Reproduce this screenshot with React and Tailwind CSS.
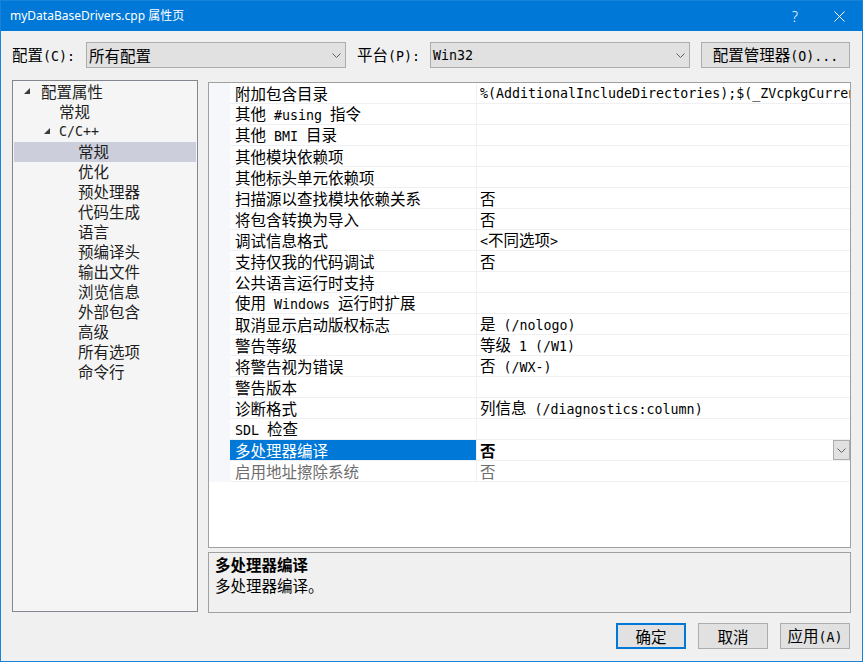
import React from "react";

const CJK_RE = /([\u2e80-\u9fff\u3000-\u303f\uff00-\uffef]+)/;

function T({ s }) {
  const parts = s.split(CJK_RE).filter((p) => p !== "");
  return (
    <>
      {parts.map((p, i) =>
        CJK_RE.test(p) ? (
          <span key={i} className="font-['Noto_Sans_CJK_SC',sans-serif] text-[15.5px]">
            {p}
          </span>
        ) : (
          <span key={i} className="font-['DejaVu_Sans_Mono','Liberation_Mono',monospace] text-[13.3px] whitespace-pre">
            {p}
          </span>
        )
      )}
    </>
  );
}

function Chevron({ className = "" }) {
  return (
    <svg width="9" height="5" viewBox="0 0 9 5" className={className}>
      <polyline points="0.5,0.5 4.5,4.5 8.5,0.5" fill="none" stroke="#606060" strokeWidth="1" />
    </svg>
  );
}

function Tri() {
  return (
    <svg width="6" height="6" viewBox="0 0 6 6" className="shrink-0">
      <polygon points="6,0 6,6 0,6" fill="#3c3c3c" />
    </svg>
  );
}

const tree = [
  { t: "配置属性", tri: true, pl: "pl-[10px]", ml: "ml-[11px]" },
  { t: "常规", pl: "pl-[45px]" },
  { t: "C/C++", tri: true, pl: "pl-[30px]", ml: "ml-[9px]" },
  { t: "常规", pl: "pl-[64px]", sel: true },
  { t: "优化", pl: "pl-[64px]" },
  { t: "预处理器", pl: "pl-[64px]" },
  { t: "代码生成", pl: "pl-[64px]" },
  { t: "语言", pl: "pl-[64px]" },
  { t: "预编译头", pl: "pl-[64px]" },
  { t: "输出文件", pl: "pl-[64px]" },
  { t: "浏览信息", pl: "pl-[64px]" },
  { t: "外部包含", pl: "pl-[64px]" },
  { t: "高级", pl: "pl-[64px]" },
  { t: "所有选项", pl: "pl-[64px]" },
  { t: "命令行", pl: "pl-[64px]" },
];

const rows = [
  ["附加包含目录", "%(AdditionalIncludeDirectories);$(_ZVcpkgCurrentInstalledDir)include"],
  ["其他 #using 指令", ""],
  ["其他 BMI 目录", ""],
  ["其他模块依赖项", ""],
  ["其他标头单元依赖项", ""],
  ["扫描源以查找模块依赖关系", "否"],
  ["将包含转换为导入", "否"],
  ["调试信息格式", "<不同选项>"],
  ["支持仅我的代码调试", "否"],
  ["公共语言运行时支持", ""],
  ["使用 Windows 运行时扩展", ""],
  ["取消显示启动版权标志", "是 (/nologo)"],
  ["警告等级", "等级 1 (/W1)"],
  ["将警告视为错误", "否 (/WX-)"],
  ["警告版本", ""],
  ["诊断格式", "列信息 (/diagnostics:column)"],
  ["SDL 检查", ""],
  ["多处理器编译", "否", "sel"],
  ["启用地址擦除系统", "否", "dis"],
];

function Combo({ text, w }) {
  return (
    <div
      className={`${w} h-[26px] bg-[#e1e1e1] border border-[#adadad] flex items-center justify-between pl-[2px] pr-[4px] leading-[20px] text-black`}
    >
      <div className="whitespace-nowrap">
        <T s={text} />
      </div>
      <Chevron />
    </div>
  );
}

function Btn({ text, w, primary }) {
  return (
    <div
      className={`${w} h-[26px] bg-[#e1e1e1] flex items-center justify-center leading-[20px] text-black ${
        primary ? "border-2 border-[#0078d7]" : "border border-[#adadad]"
      }`}
    >
      <div className="whitespace-nowrap">
        <T s={text} />
      </div>
    </div>
  );
}

export default function App() {
  return (
    <div className="w-[863px] h-[662px] border border-[#1883d7] bg-[#f0f0f0] flex flex-col overflow-hidden">
      {/* title bar */}
      <div className="h-[30px] bg-[#0078d7] flex items-center justify-between shrink-0">
        <div className="pl-[9px] text-white text-[12px] font-['Noto_Sans','Noto_Sans_CJK_SC',sans-serif] whitespace-nowrap">
          myDataBaseDrivers.cpp 属性页
        </div>
        <div className="flex h-full">
          <div className="w-[46px] h-full flex items-center justify-center text-white text-[14px] font-['Noto_Sans',sans-serif] font-light pl-[4px]">
            ?
          </div>
          <div className="w-[46px] h-full flex items-center justify-center">
            <svg width="11" height="11" viewBox="0 0 11 11">
              <line x1="0.5" y1="0.5" x2="10.5" y2="10.5" stroke="white" strokeWidth="1" />
              <line x1="10.5" y1="0.5" x2="0.5" y2="10.5" stroke="white" strokeWidth="1" />
            </svg>
          </div>
        </div>
      </div>

      {/* body */}
      <div className="flex flex-col pt-[11px] pl-[11px] pr-[11px]">
        {/* top row */}
        <div className="flex items-center h-[26px]">
          <div className="w-[74px] leading-[20px] text-black whitespace-nowrap">
            <T s="配置(C):" />
          </div>
          <Combo text="所有配置" w="w-[260px]" />
          <div className="w-[73px] ml-[11px] leading-[20px] text-black whitespace-nowrap">
            <T s="平台(P):" />
          </div>
          <Combo text="Win32" w="w-[260px]" />
          <div className="ml-[11px]">
            <Btn text="配置管理器(O)..." w="w-[149px]" />
          </div>
        </div>

        {/* main */}
        <div className="flex items-start mt-[12px] gap-[10px]">
          {/* tree */}
          <div className="w-[186px] h-[532px] border border-[#828790] bg-[#f5f5f5] p-[1px] shrink-0">
            {tree.map((n, i) => (
              <div
                key={i}
                className={`h-[20px] flex items-center pb-[2px] ${n.pl} leading-[18px] text-[#1e1e1e] whitespace-nowrap ${
                  n.sel ? "bg-[#cccedb]" : ""
                }`}
              >
                {n.tri && <Tri />}
                <div className={n.ml || ""}>
                  <T s={n.t} />
                </div>
              </div>
            ))}
          </div>

          {/* right column */}
          <div className="flex-1 mt-[2px] flex flex-col gap-[4px] min-w-0">
            <div className="h-[466px] border border-[#a0a0a0] bg-white overflow-hidden">
              {rows.map(([name, val, st], i) => (
                <div key={i} className="h-[21px] flex">
                  <div className="w-[21px] shrink-0 bg-[#f5f7fb]" />
                  <div className="flex-1 flex border-b border-[#eef0f4] min-w-0">
                    <div
                      className={`w-[247px] shrink-0 pl-[5px] flex items-center leading-[18px] whitespace-nowrap border-r border-[#eef0f4] ${
                        st === "sel"
                          ? "bg-[#0078d7] text-white"
                          : st === "dis"
                          ? "text-[#6d6d6d]"
                          : "text-black"
                      }`}
                    >
                      <div className="whitespace-nowrap">
                        <T s={name} />
                      </div>
                    </div>
                    <div
                      className={`flex-1 min-w-0 pl-[3px] flex items-center justify-between leading-[18px] whitespace-nowrap ${
                        st === "sel" ? "text-black font-bold" : st === "dis" ? "text-[#6d6d6d]" : "text-black"
                      }`}
                    >
                      <div className="whitespace-nowrap">
                        <T s={val} />
                      </div>
                      {st === "sel" && (
                        <div className="w-[17px] h-[20px] shrink-0 bg-[#e1e1e1] border border-[#adadad] flex items-center justify-center">
                          <Chevron />
                        </div>
                      )}
                    </div>
                  </div>
                </div>
              ))}
            </div>
            <div className="h-[61px] border border-[#a0a0a0] bg-[#f0f0f0] pl-[6px] pt-[1px] text-black leading-[20px]">
              <div className="font-bold whitespace-nowrap">
                <T s="多处理器编译" />
              </div>
              <div className="whitespace-nowrap">
                <T s="多处理器编译。" />
              </div>
            </div>
          </div>
        </div>

        {/* buttons */}
        <div className="flex justify-end gap-[12px] mt-[10px] pr-[1px]">
          <Btn text="确定" w="w-[70px]" primary />
          <Btn text="取消" w="w-[70px]" />
          <Btn text="应用(A)" w="w-[70px]" />
        </div>
      </div>
    </div>
  );
}
